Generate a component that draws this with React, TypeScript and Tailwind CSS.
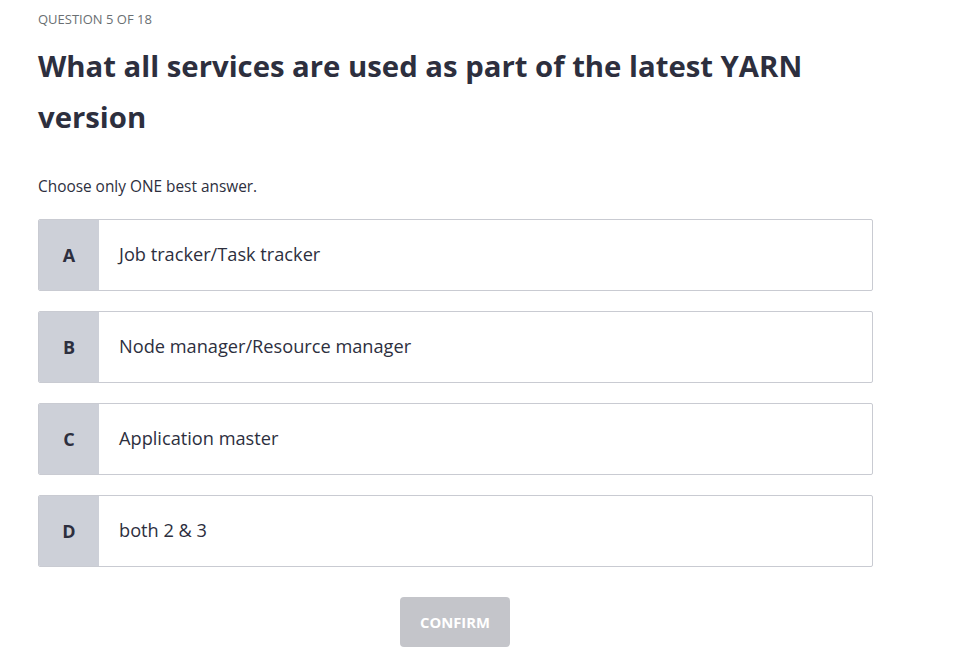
import React from "react";

const options = [
  { letter: "A", text: "Job tracker/Task tracker" },
  { letter: "B", text: "Node manager/Resource manager" },
  { letter: "C", text: "Application master" },
  { letter: "D", text: "both 2 & 3" },
];

export default function App() {
  return (
    <div
      className="min-h-screen bg-white text-[#2d2f3e]"
      style={{ fontFamily: "'Open Sans', Lato, sans-serif" }}
    >
      <div className="pl-[38px] pt-[11px] w-[873px]">
        <div className="text-[13px] leading-[16px] text-[#6a6f73]">QUESTION 5 OF 18</div>
        <h1 className="mt-[14px] text-[29.3px] leading-[51px] font-bold">
          What all services are used as part of the latest YARN version
        </h1>
        <p className="mt-[34px] text-[15.4px] leading-[20px]">Choose only ONE best answer.</p>
        <div className="mt-[22px] flex flex-col gap-[20px]">
          {options.map((o) => (
            <div
              key={o.letter}
              className="flex h-[72px] border border-[#c9cbd2] rounded-[2px] overflow-hidden"
            >
              <div className="w-[60px] bg-[#cdd0d8] flex items-center justify-center text-[18px] font-bold">
                {o.letter}
              </div>
              <div className="flex-1 flex items-center pl-[20px] text-[18.2px]">{o.text}</div>
            </div>
          ))}
        </div>
        <div className="mt-[30px] pr-[1px] flex justify-center">
          <button className="w-[110px] h-[50px] rounded-[4px] bg-[#c4c5ca] text-white font-bold text-[14.8px]">
            CONFIRM
          </button>
        </div>
      </div>
    </div>
  );
}
